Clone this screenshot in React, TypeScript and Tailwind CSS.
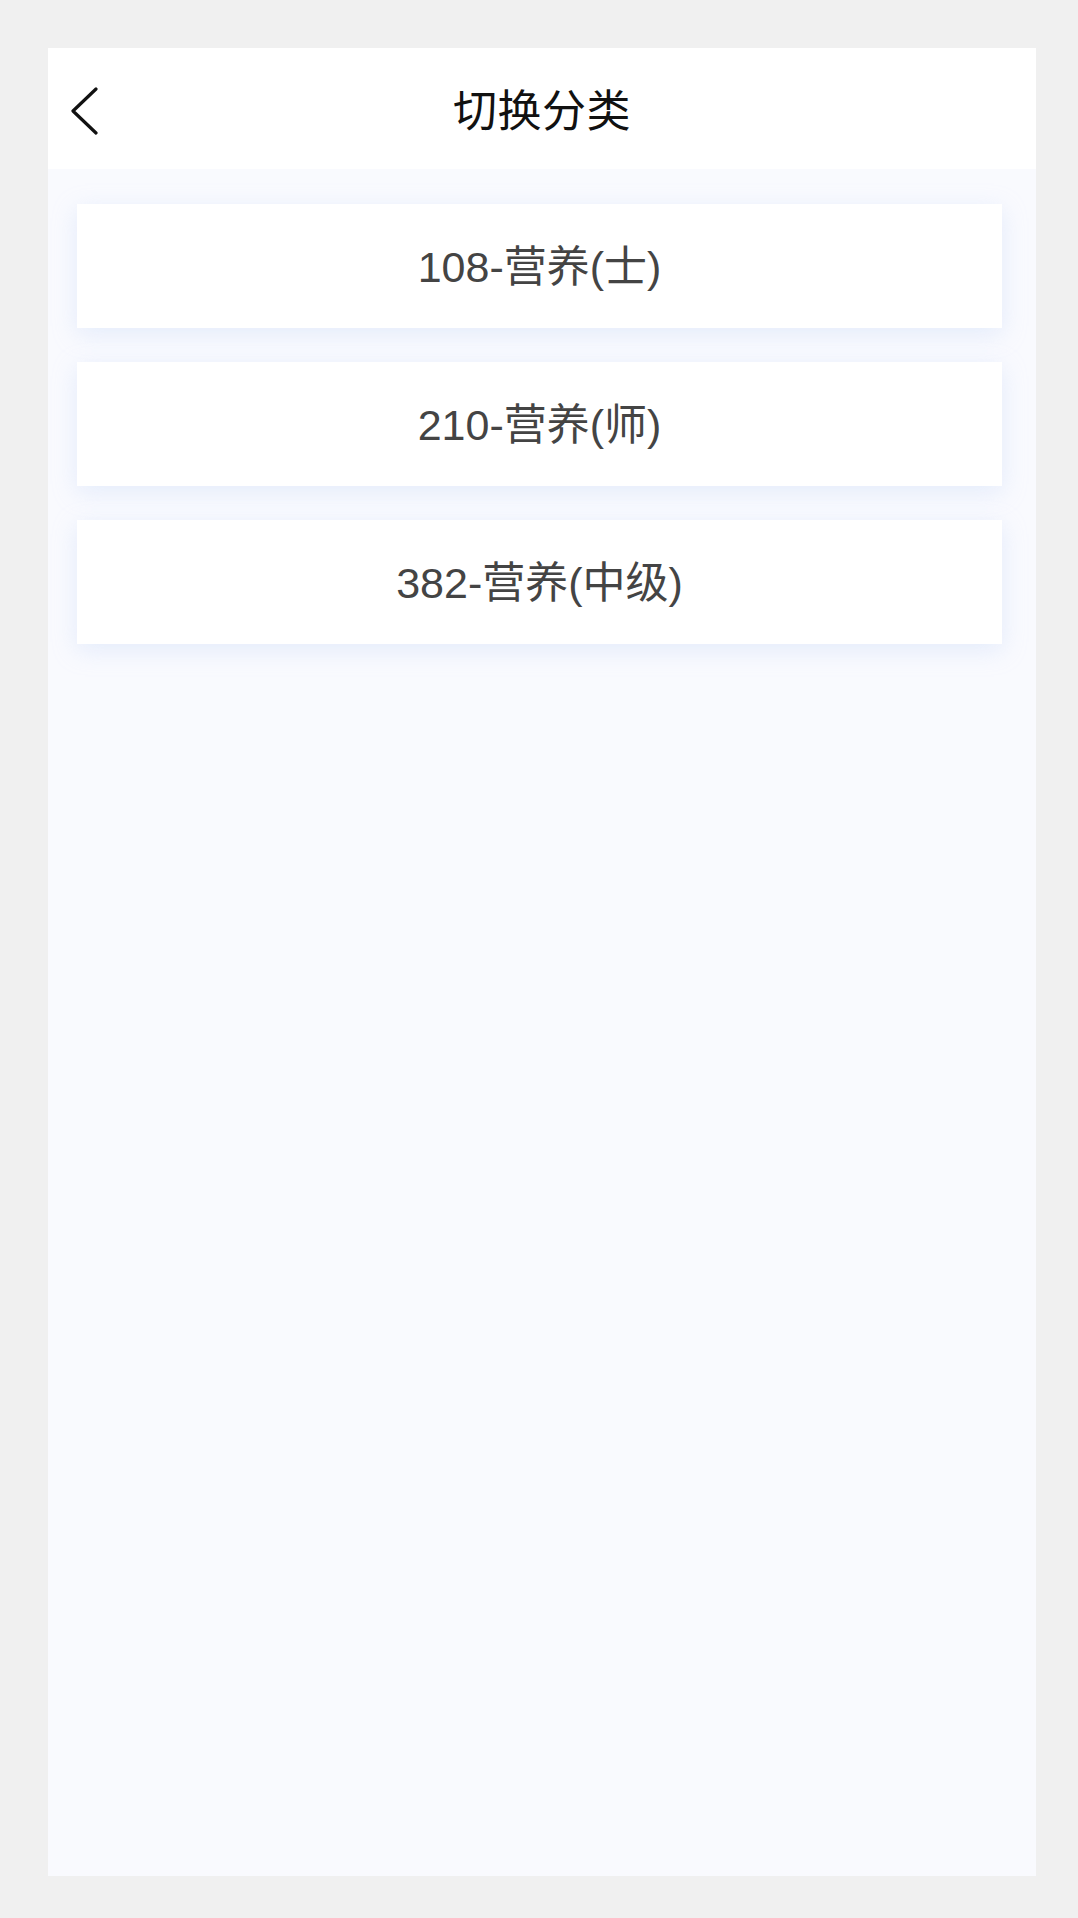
import React from "react";

const items = ["108-营养(士)", "210-营养(师)", "382-营养(中级)"];

export default function App() {
  return (
    <div className="w-[1078px] h-[1918px] bg-[#f0f0f0] pt-[48px] pl-[48px]">
      <div className="w-[988px] h-[1828px] bg-[#f9fafe] flex flex-col">
        <div className="h-[121px] bg-white relative flex items-center justify-center shrink-0 pt-[7px]">
          <svg
            className="absolute left-[22px] top-[39px]"
            width="30"
            height="48"
            viewBox="0 0 30 48"
            fill="none"
          >
            <path d="M26 2 L3 24 L26 46" stroke="#111" strokeWidth="3.2" strokeLinecap="round" strokeLinejoin="round" />
          </svg>
          <span
            className="text-[44px] leading-none text-[#111] tracking-[0.5px]"
            style={{ fontFamily: '"Liberation Sans", "Noto Sans CJK SC", sans-serif' }}
          >
            切换分类
          </span>
        </div>
        <div className="flex flex-col gap-[34px] pt-[35px] pl-[29px]">
          {items.map((t) => (
            <div
              key={t}
              className="w-[925px] h-[124px] bg-white flex items-center justify-center pt-[2px] shadow-[0_6px_22px_rgba(190,210,245,0.35)]"
            >
              <span
                className="text-[43px] leading-none text-[#444]"
                style={{ fontFamily: '"Liberation Sans", "Noto Sans CJK SC", sans-serif' }}
              >
                {t}
              </span>
            </div>
          ))}
        </div>
      </div>
    </div>
  );
}
